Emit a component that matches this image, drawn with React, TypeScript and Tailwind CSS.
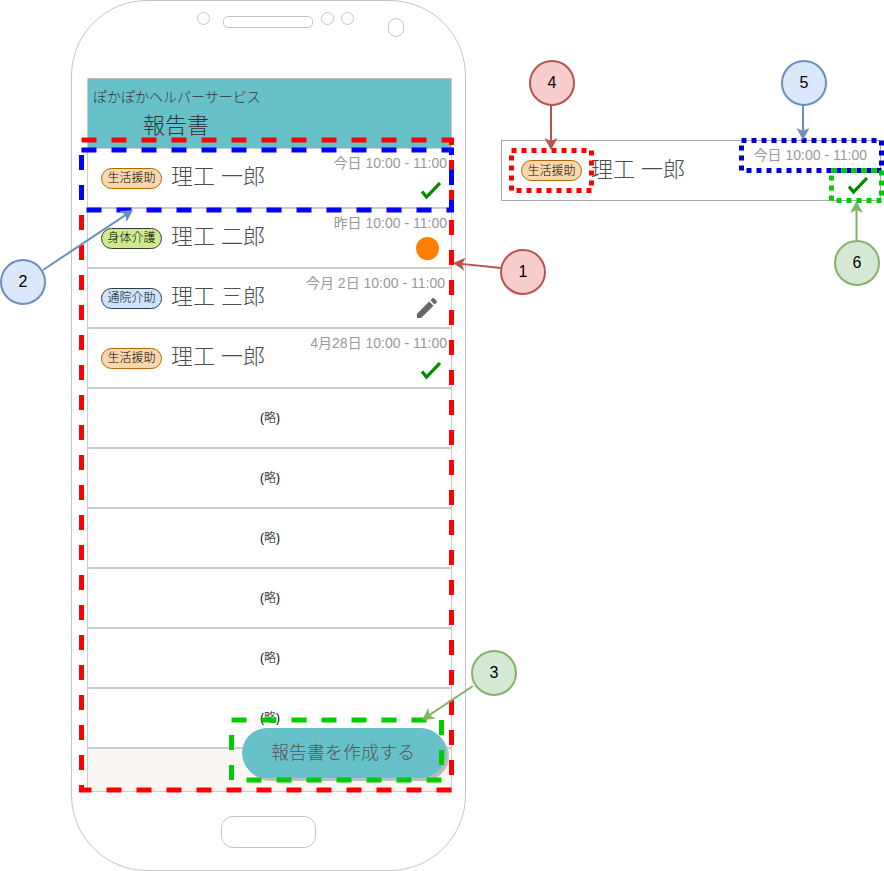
import React from 'react';

const FONT = "font-['Liberation_Sans','Noto_Sans_CJK_JP',sans-serif]";

type Tag = 'life' | 'body' | 'hospital';

const TAGS: Record<Tag, { label: string; className: string }> = {
  life: { label: '生活援助', className: 'bg-[#fad7ac] border-[#b46504]' },
  body: { label: '身体介護', className: 'bg-[#cdeb8b] border-[#36393d]' },
  hospital: { label: '通院介助', className: 'bg-[#cce5ff] border-[#36393d]' },
};

function Pill({ tag }: { tag: Tag }) {
  const t = TAGS[tag];
  return (
    <span className={`flex h-[21px] w-[61px] shrink-0 items-center justify-center rounded-full border text-[12px] font-light leading-none text-black ${t.className}`}>
      {t.label}
    </span>
  );
}

function Check() {
  return (
    <svg width="20" height="18" viewBox="0 0 20 18" fill="none">
      <path d="M1 9.5 L5.5 15 L19 1" stroke="#008a00" strokeWidth="3.2" />
    </svg>
  );
}

function Pencil() {
  return (
    <svg width="20" height="20" viewBox="3 3 18 18" fill="#666666">
      <path d="M3 17.25V21h3.75L17.81 9.94l-3.75-3.75L3 17.25zM20.71 7.04c.39-.39.39-1.02 0-1.41l-2.34-2.34c-.39-.39-1.02-.39-1.41 0l-1.83 1.83 3.75 3.75 1.83-1.83z" />
    </svg>
  );
}

function Dot() {
  return <div className="h-[23px] w-[23px] rounded-full bg-[#ff8000]" />;
}

const ROWS = [
  { tag: 'life' as Tag, name: '理工 一郎', time: '今日 10:00 - 11:00', timeGap: 'pr-[4px]', icon: <Check />, iconBox: 'mt-[11px] mr-[10px]' },
  { tag: 'body' as Tag, name: '理工 二郎', time: '昨日 10:00 - 11:00', timeGap: 'pr-[4px]', icon: <Dot />, iconBox: 'mt-[6px] mr-[12px]' },
  { tag: 'hospital' as Tag, name: '理工 三郎', time: '今月 2日 10:00 - 11:00', timeGap: 'pr-[6px]', icon: <Pencil />, iconBox: 'mt-[7px] mr-[14px]' },
  { tag: 'life' as Tag, name: '理工 一郎', time: '4月28日 10:00 - 11:00', timeGap: 'pr-[4px]', icon: <Check />, iconBox: 'mt-[11px] mr-[10px]' },
];

function VisitRow({ row }: { row: (typeof ROWS)[number] }) {
  return (
    <div className="flex h-[60px] items-center border-b-2 border-[#cccccc] bg-white pl-[13px]">
      <Pill tag={row.tag} />
      <span className="mb-[2px] ml-[9px] text-[22px] font-light leading-none text-[#4d4d4d]">{row.name}</span>
      <div className="ml-auto flex h-full flex-col items-end pt-[6px]">
        <span className={`text-[14px] leading-[16px] text-[#999999] ${row.timeGap}`}>{row.time}</span>
        <div className={row.iconBox}>{row.icon}</div>
      </div>
    </div>
  );
}

function Phone() {
  return (
    <div className="absolute left-[71px] top-0 flex h-[871px] w-[395px] flex-col rounded-[76px] border border-[#c4c4c4] bg-white">
      {/* camera, speaker, sensors */}
      <div className="flex h-[77px] shrink-0 items-start pl-[125px]">
        <div className="mt-[11px] h-[13px] w-[13px] rounded-full border border-[#c4c4c4]" />
        <div className="ml-[13px] mt-[15px] h-[12px] w-[90px] rounded-[5px] border border-[#c4c4c4]" />
        <div className="ml-[8px] mt-[11px] h-[13px] w-[13px] rounded-full border border-[#c4c4c4]" />
        <div className="ml-[7px] mt-[11px] h-[13px] w-[13px] rounded-full border border-[#c4c4c4]" />
        <div className="ml-[34px] mt-[17px] h-[19px] w-[16px] rounded-full border border-[#c4c4c4]" />
      </div>

      <div className="relative ml-[15px] flex h-[714px] w-[365px] flex-col border-x border-b border-[#cccccc]">
        <div className="h-[71px] shrink-0 border-y border-t-[#bbbbbb] border-b-[#cccccc] bg-[#66c2c8] font-light text-[#333333]">
          <div className="pl-[5px] pt-[10px] text-[14px] leading-[16px]">ぽかぽかヘルパーサービス</div>
          <div className="pl-[55px] pt-[8px] text-[22px] leading-[26px]">報告書</div>
        </div>
        {ROWS.map((row, i) => (
          <VisitRow key={i} row={row} />
        ))}
        {[0, 1, 2, 3, 4, 5].map((i) => (
          <div key={i} className="flex h-[60px] items-center justify-center border-b-2 border-[#cccccc] bg-white pl-px text-[12px] font-light text-black">
            (略)
          </div>
        ))}
        <div className="flex-1 bg-[#faf6f3]" />
        <button className="absolute bottom-[13px] right-[5px] flex h-[50px] w-[204px] items-center justify-center rounded-full bg-[#66c2c8] pr-[2px] text-[18px] font-light text-[#555555] shadow-[3px_3px_0_#bdbdbd]">
          報告書を作成する
        </button>
      </div>

      <div className="mx-auto mt-[24px] h-[32px] w-[95px] rounded-[12px] border border-[#c4c4c4]" />
    </div>
  );
}

function SampleRow() {
  return (
    <div className="absolute left-[501px] top-[140px] flex h-[61px] w-[380px] items-center border border-[#aaaaaa] bg-white pl-[19px]">
      <Pill tag="life" />
      <span className="mb-[2px] ml-[9px] text-[22px] font-light leading-none text-[#4d4d4d]">理工 一郎</span>
      <div className="ml-auto flex h-full flex-col items-end pr-[13px] pt-[6px]">
        <span className="text-[14px] leading-[16px] text-[#999999]">今日 10:00 - 11:00</span>
        <div className="mr-[-1px] mt-[14px]">
          <Check />
        </div>
      </div>
    </div>
  );
}

const BADGES = [
  { n: 1, pos: 'left-[500px] top-[249px]', color: 'bg-[#f8cecc] border-[#b85450]' },
  { n: 2, pos: 'left-[0px] top-[259px]', color: 'bg-[#dae8fc] border-[#6c8ebf]' },
  { n: 3, pos: 'left-[471px] top-[650px]', color: 'bg-[#d5e8d4] border-[#82b366]' },
  { n: 4, pos: 'left-[529px] top-[60px]', color: 'bg-[#f8cecc] border-[#b85450]' },
  { n: 5, pos: 'left-[781px] top-[60px]', color: 'bg-[#dae8fc] border-[#6c8ebf]' },
  { n: 6, pos: 'left-[834px] top-[240px]', color: 'bg-[#d5e8d4] border-[#82b366]' },
];

function Arrow({ x1, y1, x2, y2, color }: { x1: number; y1: number; x2: number; y2: number; color: string }) {
  const a = Math.atan2(y2 - y1, x2 - x1);
  const pt = (back: number, side: number) => {
    const x = x2 - back * Math.cos(a) - side * Math.sin(a);
    const y = y2 - back * Math.sin(a) + side * Math.cos(a);
    return `${x},${y}`;
  };
  return (
    <g>
      <line x1={x1} y1={y1} x2={x2 - 6 * Math.cos(a)} y2={y2 - 6 * Math.sin(a)} stroke={color} strokeWidth="2" />
      <polygon points={`${pt(0, 0)} ${pt(12, 6.5)} ${pt(9, 0)} ${pt(12, -6.5)}`} fill={color} />
    </g>
  );
}

function Annotations() {
  return (
    <svg className="absolute left-0 top-0" width="884" height="871" fill="none">
      <rect x="81.5" y="140" width="370" height="650" stroke="#ff0000" strokeWidth="5" strokeDasharray="15 15" />
      <rect x="81.5" y="150" width="370" height="60" stroke="#0000ff" strokeWidth="5" strokeDasharray="15 15" />
      <rect x="231.5" y="720" width="210" height="60" stroke="#00cc00" strokeWidth="5" strokeDasharray="15 15" />

      <rect x="511.5" y="150.5" width="80" height="40" stroke="#ff0000" strokeWidth="5" strokeDasharray="5 5" />
      <rect x="741.5" y="140.5" width="140" height="30" stroke="#0000cc" strokeWidth="5" strokeDasharray="5 5" />
      <rect x="831.5" y="170.5" width="50" height="30" stroke="#00cc00" strokeWidth="5" strokeDasharray="5 5" />

      <Arrow x1={501} y1={268} x2={453} y2={263} color="#b85450" />
      <Arrow x1={43} y1={270} x2={133} y2={210} color="#6c8ebf" />
      <Arrow x1={473} y1={686} x2={422} y2={720} color="#82b366" />
      <Arrow x1={551} y1={105} x2={551} y2={150} color="#b85450" />
      <Arrow x1={803} y1={105} x2={803} y2={140} color="#6c8ebf" />
      <Arrow x1={856.5} y1={240} x2={856.5} y2={201} color="#82b366" />
    </svg>
  );
}

export default function App() {
  return (
    <div className={`relative h-[871px] w-[884px] overflow-hidden bg-white ${FONT}`}>
      <Phone />
      <SampleRow />
      <Annotations />
      {BADGES.map((b) => (
        <div key={b.n} className={`absolute flex h-[46px] w-[46px] items-center justify-center rounded-full border-2 text-[16px] text-black ${b.pos} ${b.color}`}>
          {b.n}
        </div>
      ))}
    </div>
  );
}
